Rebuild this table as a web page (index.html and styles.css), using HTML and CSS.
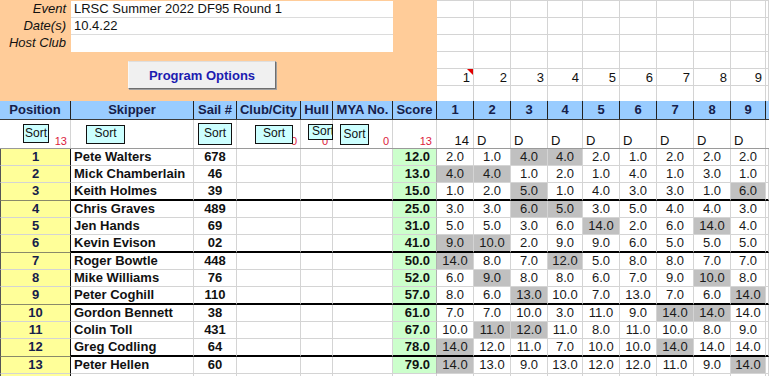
FILE: index.html
```html
<!DOCTYPE html>
<html>
<head>
<meta charset="utf-8">
<link rel="stylesheet" href="styles.css">
</head>
<body>
<div class="sheet">
  <div class="top">
    <div class="panel">
      <div class="form">
        <div class="lbl">Event</div><div class="val">LRSC Summer 2022 DF95 Round 1</div>
        <div class="lbl">Date(s)</div><div class="val">10.4.22</div>
        <div class="lbl">Host Club</div><div class="val last"></div>
      </div>
      <button class="prog">Program Options</button>
    </div>
    <div class="cells">
      <div></div><div></div><div></div><div></div><div></div><div></div><div></div><div></div><div></div><div></div>
      <div></div><div></div><div></div><div></div><div></div><div></div><div></div><div></div><div></div><div></div>
      <div></div><div></div><div></div><div></div><div></div><div></div><div></div><div></div><div></div><div></div>
      <div></div><div></div><div></div><div></div><div></div><div></div><div></div><div></div><div></div><div></div>
      <div class="num"><span class="note"></span>1</div><div class="num">2</div><div class="num">3</div><div class="num">4</div><div class="num">5</div><div class="num">6</div><div class="num">7</div><div class="num">8</div><div class="num">9</div><div></div>
      <div class="b"></div><div class="b"></div><div class="b"></div><div class="b"></div><div class="b"></div><div class="b"></div><div class="b"></div><div class="b"></div><div class="b"></div><div class="b"></div>
    </div>
  </div>

  <div class="hdr">
    <div>Position</div><div>Skipper</div><div>Sail #</div><div>Club/City</div><div>Hull</div><div>MYA No.</div><div>Score</div>
    <div>1</div><div>2</div><div>3</div><div>4</div><div>5</div><div>6</div><div>7</div><div>8</div><div>9</div><div class="x"></div>
  </div>

  <div class="sortrow">
    <div class="sc"><span class="sbtn s-pos">Sort</span><span class="cnt">13</span></div>
    <div class="sc"><span class="sbtn s-skip">Sort</span></div>
    <div class="sc"><span class="sbtn s-sail">Sort</span></div>
    <div class="sc"><span class="sbtn s-club">Sort</span><span class="cnt">0</span></div>
    <div class="sc"><span class="cnt hullcnt">0</span><span class="sbtn s-hull">Sort</span></div>
    <div class="sc"><span class="sbtn s-mya">Sort</span><span class="cnt">0</span></div>
    <div class="sc"><span class="cnt sc-score">13</span></div>
    <div class="sc rt">14</div>
    <div class="sc lt">D</div><div class="sc lt">D</div><div class="sc lt">D</div><div class="sc lt">D</div><div class="sc lt">D</div><div class="sc lt">D</div><div class="sc lt">D</div><div class="sc lt">D</div>
    <div class="sc"></div>
  </div>

  <div id="rows"></div>
</div>
<script src="app.js"></script>
</body>
</html>
```

FILE: app.js
```js
const data = [
  [1, "Pete Walters", "678", "12.0", ["2.0","1.0","*4.0","*4.0","2.0","1.0","2.0","2.0","2.0"]],
  [2, "Mick Chamberlain", "46", "13.0", ["*4.0","*4.0","1.0","2.0","1.0","4.0","1.0","3.0","1.0"]],
  [3, "Keith Holmes", "39", "15.0", ["1.0","2.0","*5.0","1.0","4.0","3.0","3.0","1.0","*6.0"]],
  [4, "Chris Graves", "489", "25.0", ["3.0","3.0","*6.0","*5.0","3.0","5.0","4.0","4.0","3.0"]],
  [5, "Jen Hands", "69", "31.0", ["5.0","5.0","3.0","6.0","*14.0","2.0","6.0","*14.0","4.0"]],
  [6, "Kevin Evison", "02", "41.0", ["*9.0","*10.0","2.0","9.0","9.0","6.0","5.0","5.0","5.0"]],
  [7, "Roger Bowtle", "448", "50.0", ["*14.0","8.0","7.0","*12.0","5.0","8.0","8.0","7.0","7.0"]],
  [8, "Mike Williams", "76", "52.0", ["6.0","*9.0","8.0","8.0","6.0","7.0","9.0","*10.0","8.0"]],
  [9, "Peter Coghill", "110", "57.0", ["8.0","6.0","*13.0","10.0","7.0","13.0","7.0","6.0","*14.0"]],
  [10, "Gordon Bennett", "38", "61.0", ["7.0","7.0","10.0","3.0","11.0","9.0","*14.0","*14.0","14.0"]],
  [11, "Colin Toll", "431", "67.0", ["10.0","*11.0","*12.0","11.0","8.0","11.0","10.0","8.0","9.0"]],
  [12, "Greg Codling", "64", "78.0", ["*14.0","12.0","11.0","7.0","10.0","10.0","*14.0","14.0","14.0"]],
  [13, "Peter Hellen", "60", "79.0", ["*14.0","13.0","9.0","13.0","12.0","12.0","11.0","9.0","*14.0"]]
];
const host = document.getElementById("rows");
function cell(cls, text) {
  const d = document.createElement("div");
  d.className = cls;
  d.textContent = text;
  return d;
}
data.forEach((r, i) => {
  const row = document.createElement("div");
  row.className = "row" + ((i + 1) % 3 === 0 ? " g" : "");
  row.appendChild(cell("c pos", r[0]));
  row.appendChild(cell("c skip", r[1]));
  row.appendChild(cell("c sail", r[2]));
  row.appendChild(cell("c", ""));
  row.appendChild(cell("c", ""));
  row.appendChild(cell("c", ""));
  row.appendChild(cell("c score", r[3]));
  r[4].forEach(v => {
    const disc = v.startsWith("*");
    row.appendChild(cell("c race" + (disc ? " disc" : ""), disc ? v.slice(1) : v));
  });
  row.appendChild(cell("c", ""));
  host.appendChild(row);
});
const last = document.createElement("div");
last.className = "row";
last.appendChild(cell("c pos", ""));
for (let k = 0; k < 16; k++) last.appendChild(cell("c", ""));
host.appendChild(last);
```

FILE: styles.css
```css
:root {
  --cols: 71px 123px 43px 64px 32px 60px 44px 37px 37px 37px 35px 37px 37px 37px 37px 35px 3px;
  --grid: #d4d4d4;
}
* { box-sizing: border-box; }
html, body {
  margin: 0;
  padding: 0;
  background: #fff;
  overflow: hidden;
}
body {
  font-family: "Liberation Sans", Arial, sans-serif;
  font-size: 13px;
  color: #111;
  width: 769px;
  height: 376px;
}
.sheet { width: 769px; }

/* top area */
.top {
  display: flex;
  height: 101px;
}
.panel {
  width: 437px;
  height: 101px;
  background: #ffcc99;
  padding-top: 1px;
}
.form {
  display: grid;
  grid-template-columns: 71px 322px;
  grid-auto-rows: 17px;
}
.lbl {
  font-style: italic;
  text-align: right;
  padding-right: 5px;
  line-height: 16px;
  color: #111;
}
.val {
  background: #fff;
  border-bottom: 1px solid #dcdcdc;
  padding-left: 3px;
  line-height: 16px;
}
.val.last { border-bottom: none; }
.prog {
  display: block;
  margin: 9px 0 0 128px;
  width: 148px;
  height: 28px;
  background: #f0f0f0;
  border: 1px solid;
  border-color: #dedede #6e6e6e #6e6e6e #f8f8f8;
  box-shadow: 1px 1px 0 #a0a0a0;
  font-family: "Liberation Sans", Arial, sans-serif;
  font-weight: bold;
  font-size: 13px;
  color: #1c1cb0;
  padding: 0;
}
.cells {
  width: 332px;
  display: grid;
  grid-template-columns: 37px 37px 37px 35px 37px 37px 37px 37px 35px 3px;
  grid-template-rows: 17px 17px 17px 17px 17px 15px;
  border-top: 1px solid var(--grid);
}
.cells > div {
  border-right: 1px solid var(--grid);
  border-bottom: 1px solid var(--grid);
}
.cells > div.b { border-bottom: none; }
.cells > .num {
  position: relative;
  text-align: right;
  padding-right: 3px;
  line-height: 17px;
}
.note {
  position: absolute;
  top: 0;
  right: 0;
  width: 0;
  height: 0;
  border-top: 6px solid #e00000;
  border-left: 6px solid transparent;
}

/* header */
.hdr {
  display: grid;
  grid-template-columns: var(--cols);
  height: 19px;
  background: #99ccff;
  border-bottom: 1px solid #3a3a3a;
}
.hdr > div {
  border-right: 1px solid #222;
  font-weight: bold;
  text-align: center;
  line-height: 18px;
  color: #16204a;
  white-space: nowrap;
  overflow: hidden;
}
.hdr > div.x { border-right: none; }

/* sort row */
.sortrow {
  display: grid;
  grid-template-columns: var(--cols);
  height: 29px;
  border-bottom: 1px solid #9a9a9a;
}
.sc {
  position: relative;
  border-right: 1px solid var(--grid);
  display: flex;
  align-items: flex-end;
  justify-content: flex-end;
  line-height: 15px;
  padding: 0 3px 0 3px;
}
.sc.rt { padding-right: 4px; }
.sc.lt { justify-content: flex-start; }
.cnt {
  color: #dc1a3c;
  font-size: 11px;
  line-height: 12px;
  margin-bottom: 1px;
}
.sc-score { margin-right: 1px; }
.hullcnt { margin-right: 1px; }
.sbtn {
  position: absolute;
  background: #ccffff;
  border: 1px solid #111;
  font-size: 12px;
  line-height: 15px;
  text-align: center;
  color: #111;
  overflow: hidden;
  white-space: nowrap;
}
.s-pos { left: 23px; top: 4px; width: 26px; height: 19px; line-height: 16px; }
.s-skip { left: 15px; top: 5px; width: 39px; height: 19px; }
.s-sail { left: 4px; top: 3px; width: 34px; height: 22px; line-height: 19px; }
.s-club { left: 18px; top: 5px; width: 38px; height: 19px; }
.s-hull { left: 7px; top: 4px; width: 25px; height: 16px; line-height: 13px; text-align: left; padding-left: 3px; }
.s-mya { left: 7px; top: 4px; width: 29px; height: 21px; line-height: 18px; }

/* data rows */
.row {
  display: grid;
  grid-template-columns: var(--cols);
  height: 17px;
}
.row.g { height: 18px; }
.c {
  border-right: 1px solid var(--grid);
  border-bottom: 1px solid var(--grid);
  line-height: 16px;
  white-space: nowrap;
  overflow: hidden;
}
.row.g .c { border-bottom: 2px solid #000; }
.row.g .c.pos { border-bottom: 1px solid #8a8a6a; }
.c.pos {
  background: #ffff99;
  border-left: 1px solid #555;
  border-right: 1px solid #111;
  font-weight: bold;
  text-align: center;
  color: #16204a;
}
.c.skip {
  font-weight: bold;
  padding-left: 3px;
}
.c.sail {
  font-weight: bold;
  text-align: center;
}
.c.score {
  background: #ccffcc;
  font-weight: bold;
  text-align: right;
  padding-right: 6px;
  border-right: 1px solid #b0b0b0;
}
.c.race {
  text-align: center;
  color: #1a1a1a;
}
.c.race.disc { background: #c0c0c0; }
```
